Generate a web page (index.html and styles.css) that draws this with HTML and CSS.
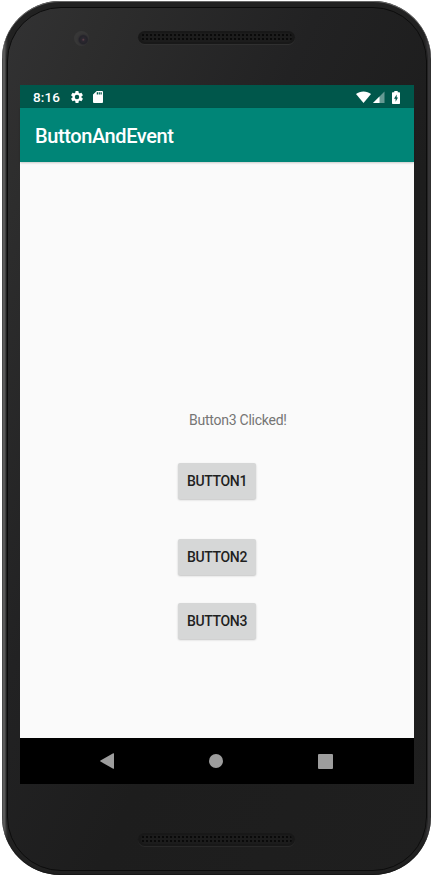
FILE: index.html
```html
<!DOCTYPE html>
<html lang="en">
<head>
<meta charset="utf-8">
<title>ButtonAndEvent</title>
<link rel="stylesheet" href="styles.css">
</head>
<body>
<div class="phone">
  <div class="face">
    <div class="bezel-top">
      <span class="camera"></span>
      <span class="speaker"></span>
    </div>
    <div class="screen">
      <header class="status">
        <span class="clock">8:16</span>
        <svg class="gear" viewBox="2 2 20 20" width="12" height="12"><path fill="#fff" fill-rule="evenodd" d="M19.4 13a7.500 7.500 0 0 0 0-2l2.100-1.650a.5.5 0 0 0 .12-.64l-2-3.460a.5.5 0 0 0-.61-.22l-2.490 1a7.300 7.300 0 0 0-1.690-.98l-.38-2.650A.49.49 0 0 0 14 2h-4a.49.49 0 0 0-.49.420l-.38 2.650c-.61.250-1.170.590-1.690.980l-2.490-1a.49.49 0 0 0-.61.220l-2 3.460a.49.49 0 0 0 .12.640L4.570 11a7.900 7.900 0 0 0 0 2l-2.110 1.650a.5.5 0 0 0-.12.640l2 3.460c.12.220.39.300.61.220l2.490-1c.52.400 1.080.730 1.690.980l.38 2.650c.03.240.24.400.49.400h4c.25 0 .46-.18.49-.42l.38-2.650a7.700 7.700 0 0 0 1.690-.98l2.490 1c.23.090.49 0 .61-.22l2-3.460a.5.5 0 0 0-.12-.64zM12 15.700a3.700 3.700 0 1 1 0-7.400 3.700 3.700 0 0 1 0 7.400z"/></svg>
        <svg class="sd" viewBox="4 2 16 20" width="10" height="12" preserveAspectRatio="none"><path fill="#fff" fill-rule="evenodd" d="M18.500 2H10L4 8v12.500q0 1.500 1.500 1.500h13q1.500 0 1.500-1.500v-17q0-1.500-1.500-1.500zm-6.500 6h-2V4h2zm3 0h-2V4h2zm3 0h-2V4h2z"/></svg>
        <svg class="wifi" viewBox="0 0 15 12" width="15" height="12"><path fill="#fff" d="M7.500 11.900L0 3.100C2 1.300 4.600.4 7.500.4s5.500.9 7.500 2.700z"/></svg>
        <svg class="signal" viewBox="0 0 12 12" width="12" height="12"><path fill="#fff" fill-opacity=".4" d="M0 12L11.500.5V12z"/><path fill="#fff" d="M0 12L6.500 5.500V12z"/></svg>
        <svg class="battery" viewBox="0 0 8 13" width="8" height="13"><path fill="#fff" fill-rule="evenodd" d="M2.300 0h3.400v1.200H7.300q.7 0 .7.700v10.400q0 .7-.7.700H.7q-.7 0-.7-.7V1.900q0-.7.7-.7h1.600zM4.700 3.500L2 7.700h1.600v3L6 6.500H4.700z"/></svg>
      </header>
      <div class="appbar">ButtonAndEvent</div>
      <main class="content">
        <p class="message">Button3 Clicked!</p>
        <button class="btn first">BUTTON1</button>
        <button class="btn second">BUTTON2</button>
        <button class="btn third">BUTTON3</button>
      </main>
      <nav class="navbar">
        <svg viewBox="0 0 15 16" width="15" height="16"><path fill="#9d9d9d" d="M.5 7.400L13.200.3q.8-.3.800.5v14.400q0 .8-.8.500L.5 8.600q-.8-.6 0-1.200z"/></svg>
        <span class="home"></span>
        <span class="recent"></span>
      </nav>
    </div>
    <div class="bezel-bottom"><span class="speaker"></span></div>
  </div>
</div>
</body>
</html>
```
FILE: styles.css
```css
* { box-sizing: border-box; }

body {
  margin: 0;
  height: 877px;
  padding: 1px 2px 1px 2px;
  overflow: hidden;
  background: #fff;
  font-family: Roboto, "Liberation Sans", sans-serif;
}

.phone {
  width: 429px;
  height: 874px;
  padding: 6px 4px 4px 5px;
  border-radius: 58px;
  background: linear-gradient(90deg, #4a4a4a 0, #626262 2px, #3b3b3b 4px, #222 6px, #222 422px, #39383a 426px, #333 429px);
  box-shadow: inset 0 1px 0 #666, inset 0 -1px 1px #171717;
}

.face {
  height: 864px;
  padding: 0 12px 0 12px;
  border: 1px solid #0c0c0c;
  border-radius: 54px;
  background: linear-gradient(115deg, #323233 0, #2d2d2d 12%, #222223 38%, #1d1d1d 60%, #1f1f1f 100%);
  box-shadow: 0 0 1px 1px #222;
}

.bezel-top {
  display: flex;
  height: 77px;
  padding: 23px 0 0 54px;
}

.camera {
  width: 15px;
  height: 15px;
  margin-right: 49px;
  border-radius: 50%;
  background: radial-gradient(circle at 62% 58%, #66424c 0, #2c2830 1.5px, #24232a 4px, #343334 5.5px, #373737 7px);
}

.speaker {
  width: 157px;
  height: 13px;
  padding: 2px 3px;
  border-radius: 7px;
  background: #181818;
  box-shadow: 0 1px 0 #303030;
}

.speaker::before {
  content: "";
  display: block;
  height: 9px;
  border-radius: 5px;
  background: radial-gradient(circle, #060606 0 .6px, #1c1c1c 1.3px) 0 0 / 4px 4px;
}

.screen {
  width: 394px;
  height: 699px;
  background: #fafafa;
}

.status {
  display: flex;
  align-items: center;
  height: 23px;
  padding: 1px 14px 0 13px;
  color: #fff;
  background: #00574b;
}

.clock {
  width: 38px;
  font-size: 13.5px;
  font-weight: 500;
  line-height: 23px;
  letter-spacing: .15px;
}

.sd { margin-left: 10px; }
.wifi { margin-left: auto; }
.signal { margin-left: 2px; }
.battery { margin-left: 7px; }

.appbar {
  position: relative;
  height: 54px;
  padding-left: 15px;
  color: #fff;
  background: #008577;
  box-shadow: 0 1px 2px rgba(0, 0, 0, .2);
  font-size: 20px;
  font-weight: 500;
  line-height: 57px;
  letter-spacing: -.4px;
}

.content {
  display: flex;
  flex-direction: column;
  height: 576px;
  padding: 248px 0 0 158px;
}

.message {
  margin: 0 0 0 11px;
  height: 20px;
  color: #757575;
  font-size: 14px;
  line-height: 20px;
  letter-spacing: -.25px;
}

.btn {
  width: 78px;
  height: 36px;
  padding: 0;
  border: 0;
  border-radius: 2px;
  color: #1f1f1f;
  background: #d6d7d7;
  box-shadow: 0 1px 2px rgba(0, 0, 0, .22);
  font: 500 14px/36px Roboto, "Liberation Sans", sans-serif;
  letter-spacing: -.35px;
}

.first { margin-top: 33px; }
.second { margin-top: 40px; }
.third { margin-top: 28px; }

.navbar {
  display: flex;
  align-items: center;
  height: 46px;
  padding-left: 80px;
  background: #000;
}

.home {
  width: 14px;
  height: 14px;
  margin-left: 94px;
  border-radius: 50%;
  background: #9d9d9d;
}

.recent {
  width: 15px;
  height: 15px;
  margin-left: 95px;
  border-radius: 1px;
  background: #9d9d9d;
}

.bezel-bottom {
  padding: 49px 0 0 118px;
}

.bezel-bottom .speaker { display: block; box-shadow: 0 1px 0 #292929; }
```
